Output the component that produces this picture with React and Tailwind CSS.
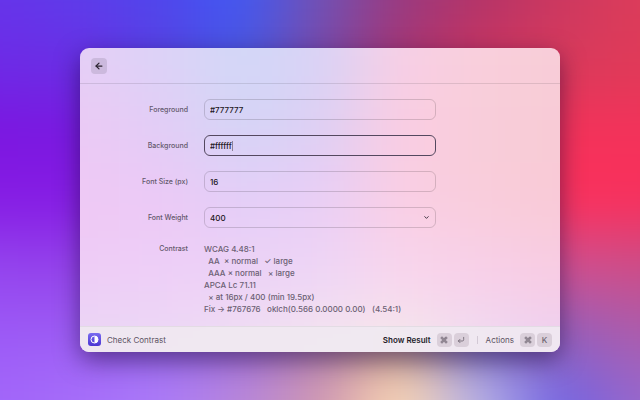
import { useState } from 'react';
import { ArrowLeft, ChevronDown, Command, CornerDownLeft } from 'lucide-react';

const WALLPAPER = [
  ['#6634ea', '#5e3cea', '#5046ec', '#4059f4', '#7252b4', '#9a3a80', '#b43468', '#cc3860', '#dc3c5a'],
  ['#6e2ae6', '#6a2ee4', '#5840e0', '#4858e0', '#7848a8', '#a83470', '#cc3460', '#d83a5c', '#e03a58'],
  ['#7c16e0', '#7a18e0', '#7030d8', '#6040d0', '#a040a0', '#c83470', '#e03458', '#f4325a', '#f4325a'],
  ['#861ce4', '#861ce4', '#8c28d8', '#8040d0', '#b050a8', '#d04080', '#e83c68', '#fc305c', '#f8305c'],
  ['#9444ee', '#9442ea', '#9048d8', '#a058d0', '#b070c0', '#c080b0', '#b060b8', '#d05090', '#cc4e88'],
  ['#9c5af6', '#9c5cf4', '#9464e8', '#9c68d8', '#b07cb0', '#c49888', '#7c70cc', '#9460bc', '#ac5cac'],
  ['#a266fa', '#a66efa', '#ac7cfa', '#b888dc', '#d098b0', '#ffdcb4', '#b8b4e8', '#7064e4', '#9868cc'],
];

const GLASS = [
  ['#e4cff6', '#dcd3f7', '#d2d8f7', '#d8d3f6', '#f7cfe6', '#f9cfdc', '#f8cdd8'],
  ['#ebcaf5', '#e2cdf6', '#d4d5f6', '#dccff5', '#fbcde2', '#f8cdd9', '#f8cbd5'],
  ['#efc8f5', '#ecc9f6', '#e4cef7', '#e9cef6', '#facee4', '#f9cddb', '#f9cad6'],
  ['#eecdf6', '#eecff7', '#edd2f6', '#eed6f6', '#f8d6ee', '#f8d0ea', '#f8cce4'],
  ['#ead8f5', '#ecd9f5', '#f0dff3', '#f4e6ee', '#f5eaea', '#eedcf2', '#ecd0f2'],
];

const REPORT = [
  'WCAG 4.48:1',
  '  AA  × normal   ✓ large',
  '  AAA × normal   × large',
  'APCA Lc 71.11',
  '  × at 16px / 400 (min 19.5px)',
  'Fix → #767676   oklch(0.566 0.0000 0.00)   (4.54:1)',
].join('\n');

// Soft color mesh, one blurred cell per entry
function Mesh({ id, colors }) {
  const cols = colors[0].length;
  const rows = colors.length;
  return (
    <svg
      aria-hidden="true"
      className="absolute inset-0 -z-10 size-full"
      viewBox={`0.5 0.5 ${cols - 1} ${rows - 1}`}
      preserveAspectRatio="none"
    >
      <filter id={id} x="-20%" y="-20%" width="140%" height="140%" colorInterpolationFilters="sRGB">
        <feGaussianBlur stdDeviation="0.42" />
      </filter>
      <g filter={`url(#${id})`}>
        {colors.map((row, y) =>
          row.map((fill, x) => {
            // outer cells run past the edge so the blur has no pale rim
            const left = x === 0 ? 2 : 0;
            const right = x === cols - 1 ? 2 : 0;
            const top = y === 0 ? 2 : 0;
            const bottom = y === rows - 1 ? 2 : 0;
            return (
              <rect
                key={`${x}-${y}`}
                x={x - left}
                y={y - top}
                width={1.02 + left + right}
                height={1.02 + top + bottom}
                fill={fill}
              />
            );
          })
        )}
      </g>
    </svg>
  );
}

function Key({ children }) {
  return (
    <kbd className="flex h-3.5 w-[15px] items-center justify-center rounded bg-[#dacfda] font-[Inter,sans-serif] text-[8px] leading-3 font-medium text-[#6d6370]">
      {children}
    </kbd>
  );
}

function Row({ label, htmlFor, children }) {
  return (
    <div className="grid grid-cols-[108px_1fr_108px] items-center gap-4">
      <label htmlFor={htmlFor} className="text-right text-[7px] leading-3 font-medium text-[#63586b]">
        {label}
      </label>
      <div className="relative">{children}</div>
    </div>
  );
}

const fieldClass =
  'block h-[21px] w-full appearance-none rounded-md border bg-transparent px-[5px] text-[8px] leading-3 font-medium text-[#1c1622] outline-none';

function App() {
  const [foreground, setForeground] = useState('#777777');
  const [background, setBackground] = useState('#ffffff');
  const [fontSize, setFontSize] = useState('16');
  const [fontWeight, setFontWeight] = useState('400');

  return (
    <div className="relative isolate flex min-h-screen items-center justify-center overflow-hidden font-[Inter,sans-serif]">
      <Mesh id="wallpaper" colors={WALLPAPER} />

      <main className="relative isolate w-3/4 overflow-hidden rounded-[9px] shadow-[0_8px_24px_rgba(20,0,50,0.5)]">
        <Mesh id="glass" colors={GLASS} />

        {/* Header */}
        <header className="flex h-9 items-center border-b border-black/10 px-[11px]">
          <button
            type="button"
            aria-label="Back"
            className="flex size-4 items-center justify-center rounded bg-black/10 text-[#2c2431]"
          >
            <ArrowLeft size={10} strokeWidth={3} />
          </button>
        </header>

        {/* Form */}
        <form className="flex flex-col gap-[15px] pt-[15px] pb-[11px]" onSubmit={(e) => e.preventDefault()}>
          <Row label="Foreground" htmlFor="foreground">
            <input
              id="foreground"
              type="text"
              value={foreground}
              onChange={(e) => setForeground(e.target.value)}
              className={`${fieldClass} border-black/15`}
            />
          </Row>
          <Row label="Background" htmlFor="background">
            <input
              id="background"
              type="text"
              value={background}
              onChange={(e) => setBackground(e.target.value)}
              className={`${fieldClass} border-[#54485f] caret-transparent`}
            />
            <span className="absolute top-1.5 left-7 h-2.5 w-px bg-[#8d8298]" />
          </Row>
          <Row label="Font Size (px)" htmlFor="font-size">
            <input
              id="font-size"
              type="text"
              value={fontSize}
              onChange={(e) => setFontSize(e.target.value)}
              className={`${fieldClass} border-black/15`}
            />
          </Row>
          <Row label="Font Weight" htmlFor="font-weight">
            <select
              id="font-weight"
              value={fontWeight}
              onChange={(e) => setFontWeight(e.target.value)}
              className={`${fieldClass} border-black/15`}
            >
              <option value="300">300</option>
              <option value="400">400</option>
              <option value="700">700</option>
            </select>
            <ChevronDown
              size={7}
              strokeWidth={3}
              className="pointer-events-none absolute top-[7px] right-1.5 text-[#2c2431]"
            />
          </Row>

          <div className="grid grid-cols-[108px_1fr] gap-4">
            <label htmlFor="contrast" className="text-right text-[7px] leading-3 font-medium text-[#63586b]">
              Contrast
            </label>
            <output id="contrast" className="text-[8px] leading-3 font-medium whitespace-pre text-[#6b6073]">
              {REPORT}
            </output>
          </div>
        </form>

        {/* Action bar */}
        <footer className="flex h-[26px] items-center border-t border-black/5 bg-[#f0e9f1]/90 px-2 text-[8px] leading-3 text-[#5c5262]">
          <svg viewBox="0 0 26 26" className="size-[13px]" aria-hidden="true">
            <defs>
              <linearGradient id="badge" x1="0" y1="0" x2="0" y2="1">
                <stop offset="0" stopColor="#7a6cf0" />
                <stop offset="1" stopColor="#4a35d2" />
              </linearGradient>
            </defs>
            <rect width="26" height="26" rx="6" fill="url(#badge)" />
            <circle cx="13" cy="13" r="7" fill="none" stroke="#fff" strokeWidth="2" />
            <path d="M13 6a7 7 0 0 1 0 14z" fill="#fff" />
          </svg>
          <span className="ml-1.5">Check Contrast</span>

          <button type="button" className="ml-auto flex items-center gap-1.5">
            <span className="font-semibold text-[#241d2a]">Show Result</span>
            <span className="flex gap-0.5">
              <Key><Command size={8} strokeWidth={2.5} /></Key>
              <Key><CornerDownLeft size={8} strokeWidth={2.5} /></Key>
            </span>
          </button>
          <span className="mx-2 h-2 w-px bg-[#d3c9d5]" />
          <button type="button" className="flex items-center gap-1.5">
            <span>Actions</span>
            <span className="flex gap-0.5">
              <Key><Command size={8} strokeWidth={2.5} /></Key>
              <Key>K</Key>
            </span>
          </button>
        </footer>
      </main>
    </div>
  );
}

export default App;
